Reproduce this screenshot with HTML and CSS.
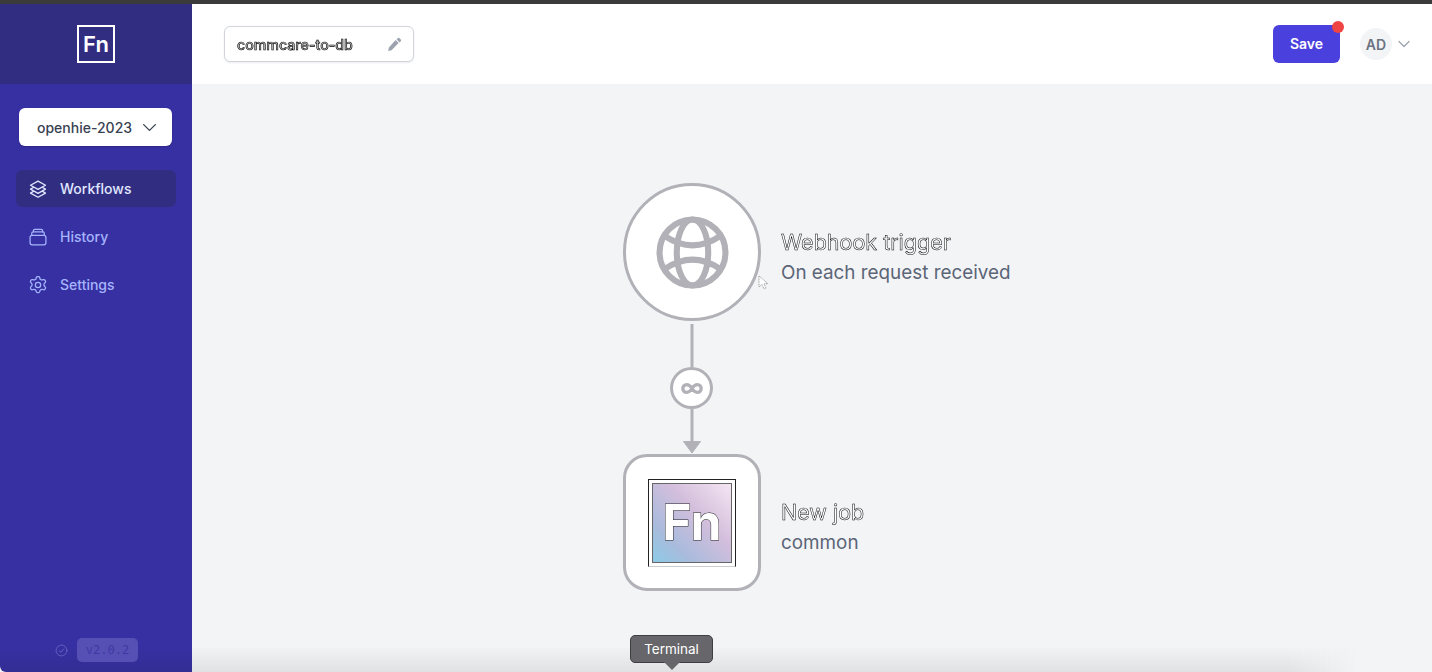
FILE: index.html
```html
<!DOCTYPE html>
<html lang="en">
<head>
<meta charset="utf-8">
<title>commcare-to-db</title>
<link rel="stylesheet" href="styles.css">
</head>
<body>
<div class="topline"></div>
<div class="app">
  <aside class="sidebar">
    <div class="brand"><div class="brand-mark">Fn</div></div>
    <div class="side-body">
      <button class="project"><span>openhie-2023</span>
        <svg class="project-chev" viewBox="0 0 16 10" fill="none" stroke="currentColor" stroke-width="1.5" stroke-linecap="round" stroke-linejoin="round"><path d="M1.5 1.8 8 8.2l6.5-6.4"/></svg>
      </button>
      <nav class="nav">
        <a class="nav-item active">
          <svg class="nav-icon" viewBox="0 0 24 24" fill="none" stroke="currentColor" stroke-width="1.5" stroke-linecap="round" stroke-linejoin="round"><path d="M12 2.5 3 7.5l9 5 9-5-9-5Z"/><path d="m6.5 10.2-3.5 2 9 5 9-5-3.500-2"/><path d="m6.500 14.900-3.500 2 9 5 9-5-3.500-2"/></svg>
          <span>Workflows</span></a>
        <a class="nav-item">
          <svg class="nav-icon" viewBox="0 0 24 24" fill="none" stroke="currentColor" stroke-width="1.5" stroke-linecap="round" stroke-linejoin="round"><rect x="2.500" y="10" width="19" height="11.500" rx="2.500"/><path d="M4.500 10V7.500A1.800 1.800 0 0 1 6.300 5.700h11.400a1.800 1.800 0 0 1 1.800 1.800V10"/><path d="M6.500 5.700V4.300a1.500 1.500 0 0 1 1.500-1.500h8a1.500 1.500 0 0 1 1.500 1.500v1.400"/></svg>
          <span>History</span></a>
        <a class="nav-item">
          <svg class="nav-icon" viewBox="0 0 24 24" fill="none" stroke="currentColor" stroke-width="1.5" stroke-linecap="round" stroke-linejoin="round"><path d="M9.900 3.200c.2-.8.900-1.200 1.600-1.200h1c.7 0 1.400.4 1.600 1.200l.3 1.300c.1.400.4.700.8.900l.8.400c.4.200.8.200 1.200.1l1.300-.4c.7-.2 1.500.1 1.900.7l.5.900c.4.600.2 1.400-.3 1.900l-1 1c-.3.300-.4.600-.4 1v1.200c0 .4.100.7.400 1l1 1c.5.500.7 1.300.3 1.900l-.5.900c-.4.600-1.200.9-1.900.7l-1.300-.4c-.4-.1-.8-.1-1.200.1l-.8.400c-.4.200-.7.500-.8.900l-.3 1.300c-.2.800-.9 1.200-1.600 1.200h-1c-.7 0-1.400-.4-1.600-1.200l-.3-1.300c-.1-.4-.4-.7-.8-.9l-.8-.4c-.4-.2-.8-.2-1.200-.1l-1.300.4c-.7.2-1.500-.1-1.900-.7l-.5-.9c-.4-.6-.2-1.400.3-1.900l1-1c.3-.3.4-.6.4-1v-1.200c0-.4-.1-.7-.4-1l-1-1c-.5-.5-.7-1.300-.3-1.900l.5-.9c.4-.6 1.200-.9 1.900-.7l1.300.4c.4.100.8.100 1.200-.1l.8-.4c.4-.2.7-.5.8-.9l.3-1.300Z"/><circle cx="12" cy="12" r="3.200"/></svg>
          <span>Settings</span></a>
      </nav>
      <div class="version">
        <svg class="version-icon" viewBox="0 0 24 24" fill="none" stroke="currentColor" stroke-width="1.500" stroke-linecap="round" stroke-linejoin="round"><circle cx="12" cy="12" r="10"/><path d="m8 12.500 3 2.800 5-6"/></svg>
        <span class="version-tag">v2.0.2</span>
      </div>
    </div>
  </aside>
  <main class="main">
    <header class="header">
      <div class="name-box"><span class="name-text">commcare-to-db</span>
        <svg class="pencil" viewBox="0 0 20 20" fill="currentColor"><path d="M14.300 1.700a1.800 1.800 0 0 1 2.500 0l1.500 1.500a1.800 1.800 0 0 1 0 2.500l-1.500 1.500-4-4 1.500-1.500ZM11.500 4 15.500 8 6 17.500l-4.500 1 1-4.500L11.500 4Z"/></svg>
      </div>
      <div class="actions">
        <button class="save">Save<span class="dot"></span></button>
        <div class="user"><span class="avatar">AD</span>
          <svg class="user-chev" viewBox="0 0 12 8" fill="none" stroke="currentColor" stroke-width="1.200" stroke-linecap="round" stroke-linejoin="round"><path d="m1 1.500 5 5 5-5"/></svg>
        </div>
      </div>
    </header>
    <section class="canvas">
      <div class="dock"></div>
      <svg class="edges" viewBox="0 0 1240 588" width="1240" height="588" fill="none">
        <path d="M500 240V283M500 325V358" stroke="#b1b1b7" stroke-width="3"/>
        <path d="M491.500 357.500h17l-8.500 11.500z" fill="#b1b1b7" stroke="#b1b1b7" stroke-linejoin="round"/>
      </svg>
      <div class="node trigger">
        <svg class="globe" viewBox="0 0 72 72" fill="none" stroke="#b1b1b7" stroke-width="6"><circle cx="36" cy="36" r="32.500"/><ellipse cx="36" cy="36" rx="15.500" ry="32.500"/><path d="M9 20Q36 38 63 20M9 52Q36 34 63 52"/></svg>
      </div>
      <div class="label label-trigger">
        <div class="label-title">Webhook trigger</div>
        <div class="label-sub">On each request received</div>
      </div>
      <div class="edge-badge">
        <svg class="infinity" viewBox="0 0 24 12" fill="none" stroke="#b1b1b7" stroke-width="3.600"><path d="M12 6C10 2.800 8.300 1.800 6.200 1.800a4.200 4.200 0 0 0 0 8.400C8.300 10.200 10 9.200 12 6c2-3.200 3.700-4.200 5.800-4.200a4.200 4.200 0 0 1 0 8.400C15.700 10.200 14 9.200 12 6Z"/></svg>
      </div>
      <div class="node job">
        <div class="job-frame"><div class="job-logo">Fn</div></div>
      </div>
      <div class="label label-job">
        <div class="label-title">New job</div>
        <div class="label-sub">common</div>
      </div>
      <svg class="cursor" viewBox="0 0 12 16"><path d="M1 1v11l3-2.500 2 4.500 2-1-2-4.300h4L1 1Z" fill="#fff" stroke="#8a8a8a" stroke-width=".8" stroke-dasharray="1 .6"/></svg>
      <div class="tooltip">Terminal</div>
    </section>
  </main>
</div>
</body>
</html>
```
FILE: styles.css
```css
* { box-sizing: border-box; }
html, body { margin: 0; height: 100%; overflow: hidden; }
body { font-family: Inter, "Liberation Sans", sans-serif; background: #f3f4f6; }
.topline { height: 4px; background: #3b3b3b; }
.app { display: flex; height: 668px; }

.sidebar { width: 192px; flex: none; display: flex; flex-direction: column; background: linear-gradient(to bottom, #3730a3 96%, #332d94 100%); border-bottom-left-radius: 6px; }
.brand { height: 80px; flex: none; display: flex; align-items: center; justify-content: center; background: #312e81; }
.brand-mark { width: 38px; height: 38px; border: 2px solid #fff; color: #fff; font-size: 22px; font-weight: 600; display: flex; align-items: center; justify-content: center; }
.side-body { flex: 1; display: flex; flex-direction: column; padding-top: 24px; }
.project { width: 153px; height: 38px; margin-left: 19px; padding: 0 15px 0 18px; border: 0; border-radius: 6px; background: #fff; color: #374151; font: 500 14px Inter, "Liberation Sans", sans-serif; display: flex; align-items: center; justify-content: space-between; box-shadow: 0 1px 2px rgba(0,0,0,.2); white-space: nowrap; }
.project-chev { width: 15px; height: 9px; color: #374151; }
.nav { width: 160px; margin: 24px 0 0 16px; display: flex; flex-direction: column; gap: 11px; }
.nav-item { height: 37px; padding-left: 12px; display: flex; align-items: center; gap: 12px; border-radius: 6px; color: #a5b4fc; font-size: 14px; font-weight: 500; }
.nav-item.active { background: #312e81; color: #e0e7ff; }
.nav-icon { width: 20px; height: 20px; flex: none; }
.version { margin-top: auto; margin-bottom: 10px; display: flex; align-items: center; justify-content: center; gap: 9px; padding-left: 1px; }
.version-icon { width: 13px; height: 13px; color: #6d68c4; }
.version-tag { width: 61px; height: 24px; border-radius: 5px; background: #5650b4; color: #3f39a6; font: 500 12px/24px "DejaVu Sans Mono", "Liberation Mono", monospace; text-align: center; }

.main { flex: 1; display: flex; flex-direction: column; min-width: 0; }
.header { height: 80px; flex: none; background: #fff; display: flex; align-items: center; justify-content: space-between; padding: 0 22px 0 32px; }
.name-box { width: 190px; height: 36px; display: flex; align-items: center; justify-content: space-between; padding: 0 11px 0 12px; background: #fff; border: 1px solid #d1d5db; border-radius: 6px; box-shadow: 0 1px 2px rgba(0,0,0,.08); }
.name-text { font-size: 14.200px; font-weight: 500; color: #bbb; -webkit-text-stroke: .6px #000; will-change: transform; }
.pencil { width: 15px; height: 15px; color: #9ca3af; }
.actions { display: flex; align-items: center; }
.save { position: relative; width: 67px; height: 38px; padding: 0 0 2px; border: 0; border-radius: 6px; background: #4a40de; color: #fff; font: 600 14px Inter, "Liberation Sans", sans-serif; margin-right: 20px; }
.dot { position: absolute; top: -4px; right: -4px; width: 12px; height: 12px; border-radius: 50%; background: #ef4444; }
.user { display: flex; align-items: center; gap: 6px; color: #9ca3af; }
.avatar { width: 32px; height: 32px; border-radius: 50%; background: #f3f4f6; color: #6b7280; font-size: 14px; font-weight: 600; display: flex; align-items: center; justify-content: center; }
.user-chev { width: 12px; height: 8px; }

.canvas { position: relative; flex: 1; background: #f3f4f6; overflow: hidden; }
.edges { position: absolute; left: 0; top: 0; }
.node { position: absolute; left: 431px; width: 138px; height: 138px; background: #fff; border: 3px solid #b1b1b7; }
.trigger { top: 99px; border-radius: 50%; display: flex; align-items: center; justify-content: center; }
.globe { width: 73px; height: 73px; }
.job { top: 370px; height: 137px; border-radius: 24px; display: flex; align-items: center; justify-content: center; }
.job-frame { width: 88px; height: 88px; border: 1px solid #222; border-bottom-color: #ccc; padding: 3px; background: #fff; }
.job-logo { width: 100%; height: 100%; border: 1px solid #666; background: linear-gradient(to top right, #8ccbe6 0%, #a9bbdc 25%, #d3bedc 60%, #f4e6f2 100%); color: #fff; -webkit-text-stroke: 1px #222; paint-order: stroke fill; font-size: 50px; font-weight: 700; display: flex; align-items: center; justify-content: center; padding-bottom: 2px; }
.label { position: absolute; left: 589px; font-size: 18.850px; line-height: 30px; }
.label-title { font-size: 21.500px; color: #fff; -webkit-text-stroke: .5px #000; will-change: transform; width: max-content; }
.label-sub { color: #5b6577; margin-top: 1px; }
.label-trigger { top: 143px; }
.label-job { top: 413px; }
.edge-badge { position: absolute; left: 478px; top: 283px; width: 43px; height: 42px; border-radius: 50%; background: #fff; border: 3px solid #b1b1b7; display: flex; align-items: center; justify-content: center; }
.infinity { width: 22px; height: 11px; }
.cursor { position: absolute; left: 566px; top: 191px; width: 12px; height: 16px; }
.dock { position: absolute; left: 0; right: 75px; bottom: 0; height: 24px; background: linear-gradient(to bottom, #f1f2f3, #e0e1e3); -webkit-mask-image: linear-gradient(to right, #000 94%, transparent 100%); mask-image: linear-gradient(to right, #000 94%, transparent 100%); }
.tooltip { position: absolute; left: 438px; top: 551px; width: 83px; height: 28px; background: #67676b; border: 1px solid #3f3f43; border-radius: 5px; color: #fff; font-size: 13.500px; line-height: 26px; text-align: center; }
.tooltip::after { content: ""; position: absolute; left: 33px; top: 26px; border: 8px solid transparent; border-top-color: #67676b; border-bottom: 0; }
```
